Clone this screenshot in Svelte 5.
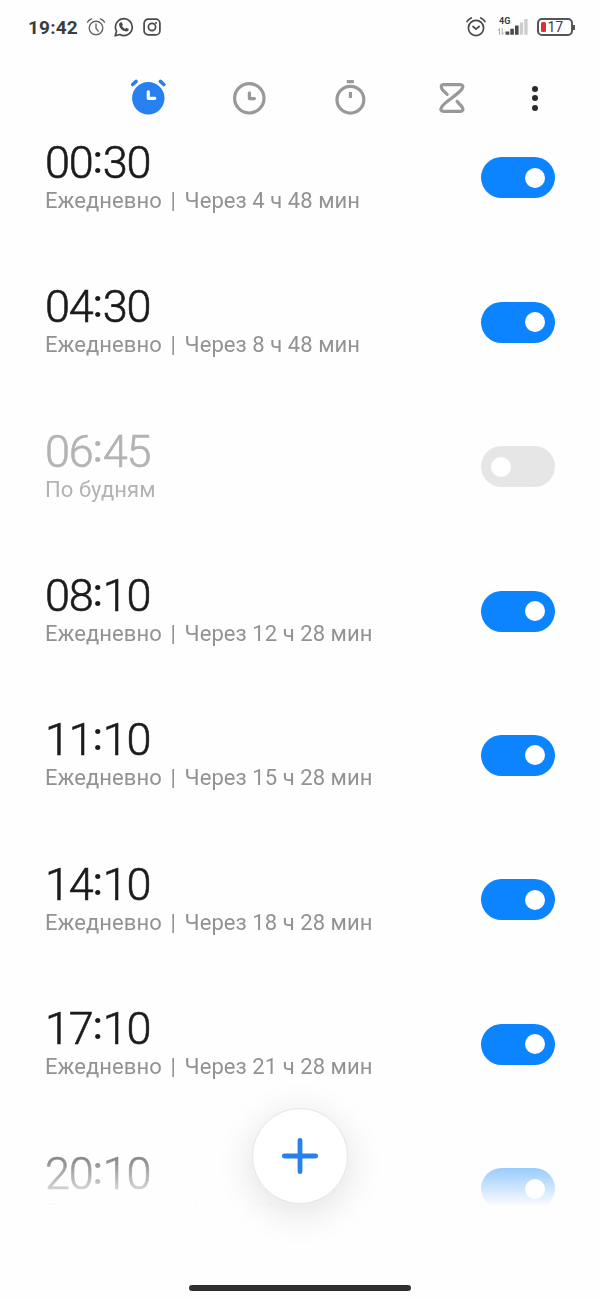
<script>
  let alarms = $state([
    { time: '00:30', repeat: 'Ежедневно', left: 'Через 4 ч 48 мин', on: true },
    { time: '04:30', repeat: 'Ежедневно', left: 'Через 8 ч 48 мин', on: true },
    { time: '06:45', repeat: 'По будням', left: '', on: false },
    { time: '08:10', repeat: 'Ежедневно', left: 'Через 12 ч 28 мин', on: true },
    { time: '11:10', repeat: 'Ежедневно', left: 'Через 15 ч 28 мин', on: true },
    { time: '14:10', repeat: 'Ежедневно', left: 'Через 18 ч 28 мин', on: true },
    { time: '17:10', repeat: 'Ежедневно', left: 'Через 21 ч 28 мин', on: true },
    { time: '20:10', repeat: 'Ежедневно', left: 'Через 28 мин', on: true },
  ]);
</script>

<div class="screen">
  <header class="status">
    <span class="clock">19:42</span>
    <svg class="s-alarm thin" width="20" height="20" viewBox="0 0 20 20">
      <circle cx="10" cy="11" r="6.8" />
      <path d="M10 7v4.2l2.2 3M1.5 5.2Q3 2.6 5.6 1.8M18.5 5.2Q17 2.6 14.4 1.8" />
    </svg>
    <svg class="s-whatsapp" width="20" height="20" viewBox="0 0 20 20">
      <path d="M1.2 18.8l1.3-4.6A8.4 8.4 0 1 1 5.8 17.5Z" />
      <path class="fill" d="M6.7 5.3h1.1l1.1 2.5-.8 1.2q1 2 3 2.9l1.1-1.1 2.5 1.2q0 2.5-2.5 2.5-6.3-.9-7.2-6.7 0-1.7 1.7-2.5Z" />
    </svg>
    <svg class="s-insta" width="18" height="18" viewBox="0 0 18 18">
      <rect x="1.1" y="1.1" width="15.8" height="15.8" rx="4.2" />
      <circle cx="9" cy="9" r="3.6" />
      <circle class="fill" cx="13" cy="5" r="1" />
    </svg>

    <svg class="s-alarm right" width="22" height="22" viewBox="0 0 22 22">
      <circle cx="11" cy="12" r="7.6" />
      <path d="M8 10.5l3 2.7 3.2-2.7M2 5.6Q3.6 3 6.3 2M20 5.6Q18.4 3 15.7 2" />
    </svg>
    <div class="network">
      <span class="gen">4G</span>
      <svg width="33" height="18" viewBox="0 0 33 18">
        <path class="arrows" d="M2.5 16.5v-6l-1.5 1.6M5.2 10.5v6l1.5-1.6" />
        <path class="bars" d="M8.5 13.5h3.8v3.3H8.5zM13.3 10.8h3.6v6h-3.6zM18 7.6h3.6v9.2h-3.6z" />
        <path class="bars off" d="M22.8 4.4h3.3v12.4h-3.3zM27.3 1h3.3v15.8h-3.3z" />
      </svg>
    </div>
    <div class="battery"><i></i><span>17</span></div>
    <b class="nub"></b>
  </header>

  <nav class="tabs">
    <button aria-label="Будильник">
      <svg width="40" height="40" viewBox="0 0 40 40">
        <circle cx="20.3" cy="20.3" r="16.2" fill="#2680f0" stroke="none" />
        <path class="bell" d="M4.7 6.5l3.4-3.1M35.8 6.5l-3.4-3.1" />
        <path class="hand" d="M20.3 13.8v6.5h6.5" />
      </svg>
    </button>
    <button aria-label="Часы">
      <svg width="40" height="40" viewBox="0 0 40 40">
        <circle cx="20.3" cy="20.3" r="14.7" />
        <path d="M20.4 14.8v5.8h5" />
      </svg>
    </button>
    <button aria-label="Секундомер">
      <svg width="40" height="40" viewBox="0 0 40 40">
        <circle cx="20.4" cy="21.7" r="13.4" />
        <path d="M16.8 3.7h7M20.4 14v6" stroke-linecap="butt" />
      </svg>
    </button>
    <button aria-label="Таймер">
      <svg width="40" height="40" viewBox="0 0 40 40">
        <path d="M16.2 16.3l-4.7-4.5Q8.5 6.9 12.6 6.7h16.8q4 .2 1.6 4.3Q29.3 13.5 20.8 20 12.5 26 10.8 28.8q-2.4 4.3 1.8 4.5h16.8q4-.2 1.6-4.5L26.1 23.4" />
      </svg>
    </button>
    <button class="more" aria-label="Ещё">
      <i></i><i></i><i></i>
    </button>
  </nav>

  <main class="list">
    {#each alarms as alarm}
      <div class="alarm" class:off={!alarm.on}>
        <div class="info">
          <div class="time">{alarm.time.slice(0, 2)}<span class="colon">:</span>{alarm.time.slice(3)}</div>
          <div class="sub">
            <span>{alarm.repeat}</span>
            {#if alarm.left}
              <span class="sep">|</span>
              <span>{alarm.left}</span>
            {/if}
          </div>
        </div>
        <button
          class="switch"
          role="switch"
          aria-checked={alarm.on}
          aria-label={alarm.time}
          onclick={() => (alarm.on = !alarm.on)}
        ><i></i></button>
      </div>
    {/each}
  </main>

  <button class="add" aria-label="Добавить">
    <svg width="40" height="40" viewBox="0 0 40 40">
      <path d="M20 4.3v31.4M4.3 20h31.4" />
    </svg>
  </button>
  <div class="home"></div>
</div>

<style>
  :global(body) {
    margin: 0;
    background: #fefefe;
  }

  .screen {
    position: relative;
    display: flex;
    flex-direction: column;
    width: 600px;
    height: 1299px;
    overflow: hidden;
    background: #fefefe;
    font-family: Roboto, sans-serif;
  }

  button {
    border: none;
    padding: 0;
    background: none;
    cursor: pointer;
  }

  svg {
    display: block;
    flex: none;
    fill: none;
    stroke-linecap: round;
    stroke-linejoin: round;
  }

  .status {
    display: flex;
    align-items: center;
    height: 54px;
    padding: 0 25px 0 28px;
    box-sizing: border-box;
    color: #3c3c3c;
  }

  .status svg {
    stroke: #4a4a4a;
    stroke-width: 1.7;
  }

  .status .thin {
    stroke: #666;
    stroke-width: 1.4;
  }

  .status .fill {
    fill: #4a4a4a;
    stroke: none;
  }

  .clock {
    width: 50px;
    font-size: 19px;
    font-weight: 700;
    letter-spacing: 0.2px;
    white-space: nowrap;
  }

  .s-alarm {
    margin-left: 8px;
  }

  .s-whatsapp {
    margin-left: 8px;
  }

  .s-insta {
    margin-left: 9px;
  }

  .s-alarm.right {
    margin-left: auto;
  }

  .network {
    position: relative;
    margin-left: 10px;
  }

  .gen {
    position: absolute;
    left: 2px;
    top: -2px;
    font-size: 9px;
    font-weight: 700;
    line-height: 11px;
  }

  .network .arrows {
    stroke: #aaa;
    stroke-width: 1;
  }

  .network .bars {
    fill: #4a4a4a;
    stroke: none;
  }

  .network .bars.off {
    fill: #ccc;
  }

  .battery {
    display: flex;
    align-items: center;
    width: 36px;
    height: 18px;
    margin-left: 7px;
    padding-left: 2px;
    box-sizing: border-box;
    border: 2px solid #555;
    border-radius: 5px;
    font-size: 14px;
    line-height: 14px;
  }

  .battery i {
    width: 5px;
    height: 10px;
    margin-right: 1.5px;
    border-radius: 1.5px;
    background: #dc3038;
  }

  .nub {
    width: 2px;
    height: 5px;
    background: #555;
  }

  .tabs {
    display: flex;
    align-items: flex-end;
    height: 64px;
    padding-left: 128px;
  }

  .tabs button {
    width: 40px;
    height: 40px;
    margin-right: 61.1px;
    display: flex;
    align-items: center;
  }

  .tabs svg {
    stroke: #999;
    stroke-width: 3.2;
  }

  .tabs .bell {
    stroke: #2680f0;
    stroke-width: 3.6;
  }

  .tabs .hand {
    stroke: #fff;
  }

  .tabs .more {
    flex-direction: column;
    justify-content: center;
    gap: 3.5px;
    margin: 0 0 0 -17px;
  }

  .more i {
    width: 6px;
    height: 6px;
    border-radius: 50%;
    background: #2a2a2a;
  }

  .list {
    height: 1092px;
    padding-top: 17.8px;
    box-sizing: border-box;
    overflow: hidden;
    -webkit-mask-image: linear-gradient(#000 995px, transparent 1089px);
    mask-image: linear-gradient(#000 995px, transparent 1089px);
  }

  .alarm {
    display: flex;
    justify-content: space-between;
    align-items: flex-start;
    height: 144.43px;
    padding: 0 45px;
  }

  .time {
    height: 51px;
    color: #1b1b1b;
    font-size: 45px;
    font-weight: 300;
    line-height: 54px;
    letter-spacing: -1.1px;
    white-space: nowrap;
    -webkit-text-stroke: 0.6px currentColor;
  }

  .colon {
    position: relative;
    top: -5px;
    display: inline-block;
    width: 10px;
    font-size: 38px;
    font-weight: 500;
    line-height: 46px;
    letter-spacing: 0;
    text-align: center;
    -webkit-text-stroke: 0;
  }

  .sub {
    display: flex;
    height: 28px;
    color: #929292;
    font-size: 22px;
    line-height: 28px;
    letter-spacing: 0.06px;
    white-space: nowrap;
  }

  .sep {
    margin: 0 8.7px;
  }

  .off .time,
  .off .sub {
    color: #b3b3b3;
  }

  .switch {
    display: flex;
    align-items: center;
    justify-content: flex-end;
    width: 74px;
    height: 41px;
    margin-top: 21.5px;
    padding: 0 10px;
    border-radius: 21px;
    background: #0d84ff;
  }

  .switch i {
    width: 20px;
    height: 20px;
    border-radius: 50%;
    background: #fff;
  }

  .off .switch {
    justify-content: flex-start;
    background: #e6e6e6;
  }

  .add {
    position: absolute;
    left: 252px;
    top: 1107.5px;
    display: flex;
    align-items: center;
    justify-content: center;
    width: 96px;
    height: 96px;
    box-sizing: border-box;
    border: 1px solid #e6e6e6;
    border-radius: 50%;
    background: #fff;
    box-shadow: 0 8px 38px rgba(0, 0, 0, 0.12);
  }

  .add svg {
    stroke: #2680f0;
    stroke-width: 4.8;
  }

  .home {
    width: 222px;
    height: 6px;
    margin: 75px auto 0;
    border-radius: 3px;
    background: #303030;
  }
</style>
